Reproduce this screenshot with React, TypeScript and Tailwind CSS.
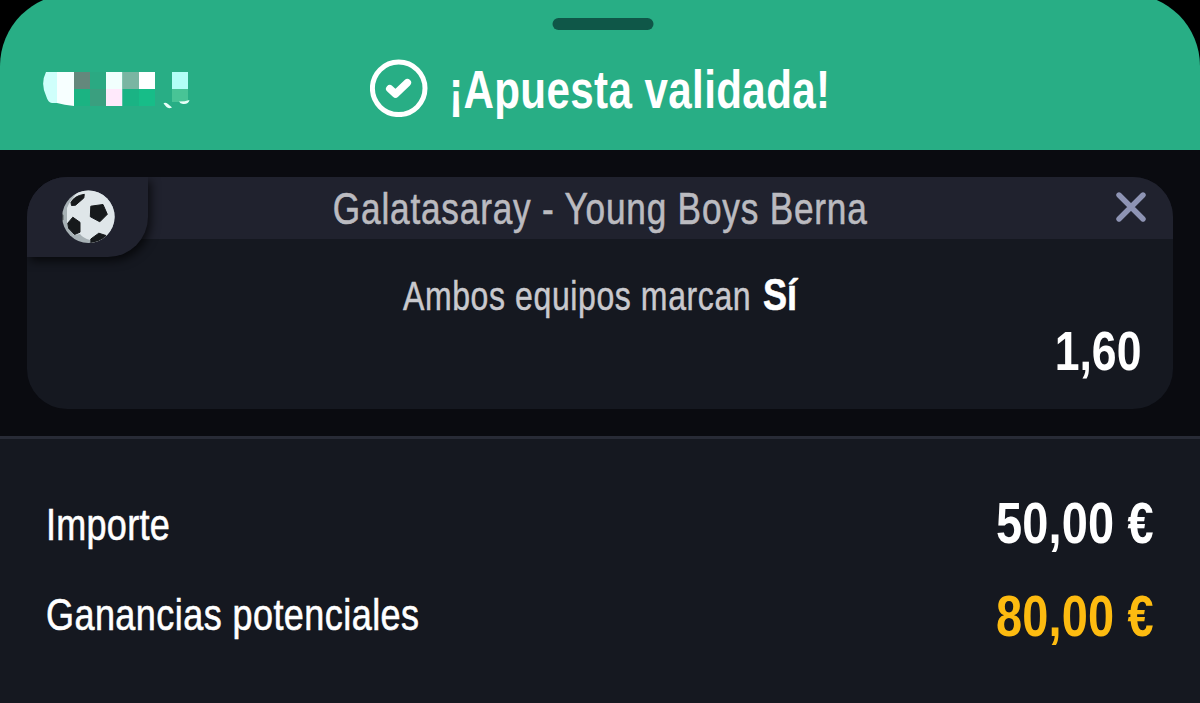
import React from "react";

type Cell = { x: number; y: number; w: number; h: number; fill: string };

const CELLS: Cell[] = [
  { x: 32, y: 1, w: 16, h: 17, fill: "#64887c" },
  { x: 48, y: 1, w: 16, h: 17, fill: "#2ba982" },
  { x: 64, y: 1, w: 16.5, h: 17, fill: "#f1fffd" },
  { x: 80.5, y: 1, w: 16.5, h: 17, fill: "#7ab5a2" },
  { x: 97, y: 1, w: 16, h: 17, fill: "#fdffff" },
  { x: 130, y: 1, w: 16, h: 17, fill: "#b2fff6" },
  { x: 32, y: 18, w: 16, h: 17, fill: "#1bb382" },
  { x: 48, y: 18, w: 16, h: 17, fill: "#3a9f7f" },
  { x: 64, y: 18, w: 16.5, h: 17, fill: "#ffe9fb" },
  { x: 80.5, y: 18, w: 16.5, h: 17, fill: "#1ab384" },
  { x: 97, y: 18, w: 16, h: 17, fill: "#17bd88" },
  { x: 130, y: 18, w: 16, h: 13, fill: "#48c496" },
];

function MaskedBalance() {
  return (
    <svg className="h-[40px] w-[150px]" viewBox="0 0 150 40" aria-hidden="true">
      <path d="M4 1H16V32H10Q6 31.500 4.500 26Q-2 13 4 1Z" fill="#cffffb" />
      <path d="M15 1H32V35Q22 34 15 32Z" fill="#f7ffff" />
      {CELLS.map((c) => (
        <rect key={`${c.x}-${c.y}`} x={c.x} y={c.y} width={c.w} height={c.h} fill={c.fill} />
      ))}
      <path d="M121.500 32.500Q123 31 126 33L130 36.500Q126.500 38 124.500 36Z" fill="#e8fff8" />
      <path d="M137 30.500Q143 30.500 147.500 29Q146.500 33.500 141 33Q138 32.500 137 30.500Z" fill="#e8fff8" />
    </svg>
  );
}

function CheckCircle() {
  return (
    <svg className="size-[58px]" viewBox="0 0 58 58" fill="none" stroke="#fff" aria-hidden="true">
      <circle cx="28.700" cy="29.300" r="26.300" strokeWidth="5" />
      <path d="M19.800 29.800L25.500 35L37.300 23.700" strokeWidth="7.600" strokeLinecap="round" strokeLinejoin="round" />
    </svg>
  );
}

function Ball() {
  return (
    <svg className="size-[54px]" viewBox="0 0 54 54" aria-hidden="true">
      <defs>
        <clipPath id="ball">
          <circle cx="27.400" cy="26.700" r="26.200" />
        </clipPath>
      </defs>
      <g clipPath="url(#ball)">
        <rect width="54" height="54" fill="#a6b0b4" />
        <path d="M6 18Q9 10 20 -2H56V56H32L29 50Q22 48 19 44L13 45L6 34Z" fill="#dfe6e9" />
        <g fill="#16191b" stroke="#16191b" strokeWidth="1" strokeLinejoin="round">
          <path d="M10 12.500Q13 6 23.300 4.300L22.800 8L14.500 15.200L10.500 15.500Z" />
          <path d="M29.800 16.200L42 14.500L46.300 24.300L38.800 31.800L29.300 26.700Z" />
          <path d="M6.700 33.300L11.800 27.200L19 32.300V42.200L13.500 44.500L7.700 38.300Z" />
          <path d="M29.800 49L37.800 43.200L45 45.500L43 53L30 56Z" />
        </g>
        <path d="M0 23L2.300 25V30L0 31Z" fill="#2a2e31" />
      </g>
    </svg>
  );
}

export default function App() {
  return (
    <div className="flex h-[703px] w-[1200px] flex-col overflow-hidden bg-[#0a0b10] font-['Liberation_Sans',Arial,sans-serif] whitespace-nowrap">
      <div className="h-[150px] shrink-0 overflow-hidden bg-black">
        <header className="-mt-[6px] h-[156px] rounded-t-[72px] bg-[#28ae85] pt-[24px]">
          <div className="mx-auto h-[12px] w-[101px] translate-x-[2.5px] rounded-full bg-[#0f5748]" />
          <div className="mt-[29px] grid grid-cols-[370px_1fr]">
            <div className="pt-[12px] pl-[42px]">
              <MaskedBalance />
            </div>
            <div className="flex items-start gap-[20.5px]">
              <CheckCircle />
              <h1 className="origin-left scale-x-[0.78] pt-[2px] text-[54px] leading-[56px] font-bold tracking-[0.5px] text-white">¡Apuesta validada!</h1>
            </div>
          </div>
        </header>
      </div>

      <section className="h-[286px] shrink-0 px-[27px] pt-[27px]">
        <article className="relative h-[232px] overflow-hidden rounded-[40px] bg-[#151820]">
          <div className="flex h-[62px] items-center justify-center bg-[#20222e]">
            <h2 className="scale-x-[0.8] pt-[2px] text-[44px] leading-none tracking-[1px] text-[#bbbbc0] [-webkit-text-stroke:0.6px_#bbbbc0]">Galatasaray - Young Boys Berna</h2>
          </div>
          <p className="mt-[30px] flex items-baseline justify-center gap-[11px] leading-[51px]">
            <span className="w-[349px] origin-left scale-x-[0.8] text-[40px] tracking-[0.75px] text-[#c9c9ce] [-webkit-text-stroke:0.5px_#c9c9ce]">Ambos equipos marcan</span>
            <strong className="w-[34px] origin-left scale-x-[0.82] text-[44px] font-bold text-white [-webkit-text-stroke:0.6px_white]">Sí</strong>
          </p>
          <div className="-mt-px origin-right scale-x-[0.81] pr-[39px] text-right text-[55px] leading-[60px] font-bold text-white">1,60</div>
          <div className="absolute top-0 left-0 flex h-[80px] w-[121px] items-center justify-center rounded-br-[40px] bg-[#20222e] shadow-[3px_4px_10px_rgba(0,0,0,0.65)]">
            <Ball />
          </div>
          <button aria-label="Cerrar" className="absolute top-[15px] right-[27px] size-[30px]">
            <svg viewBox="0 0 30 30" fill="none" stroke="#8e94b4" strokeWidth="5.400" strokeLinecap="round">
              <path d="M3 3L27 27M27 3L3 27" />
            </svg>
          </button>
        </article>
      </section>

      <section className="flex-1 border-t-[3px] border-[#282b36] bg-[#151820] px-[46px] pt-[41px]">
        <div className="flex h-[92px] items-center justify-between">
          <span className="origin-left scale-x-[0.8] pb-[4px] text-[45px] leading-none tracking-[0.35px] text-white [-webkit-text-stroke:0.6px_white]">Importe</span>
          <span className="origin-right scale-x-[0.81] pb-[6px] text-[58px] leading-none font-bold tracking-[0.2px] text-white">50,00 €</span>
        </div>
        <div className="flex h-[92px] items-center justify-between">
          <span className="origin-left scale-x-[0.8] pb-[7px] text-[45px] leading-none tracking-[0.55px] text-white [-webkit-text-stroke:0.6px_white]">Ganancias potenciales</span>
          <span className="origin-right scale-x-[0.81] pb-[4px] text-[58px] leading-none font-bold tracking-[0.2px] text-[#fdbb10]">80,00 €</span>
        </div>
      </section>
    </div>
  );
}
